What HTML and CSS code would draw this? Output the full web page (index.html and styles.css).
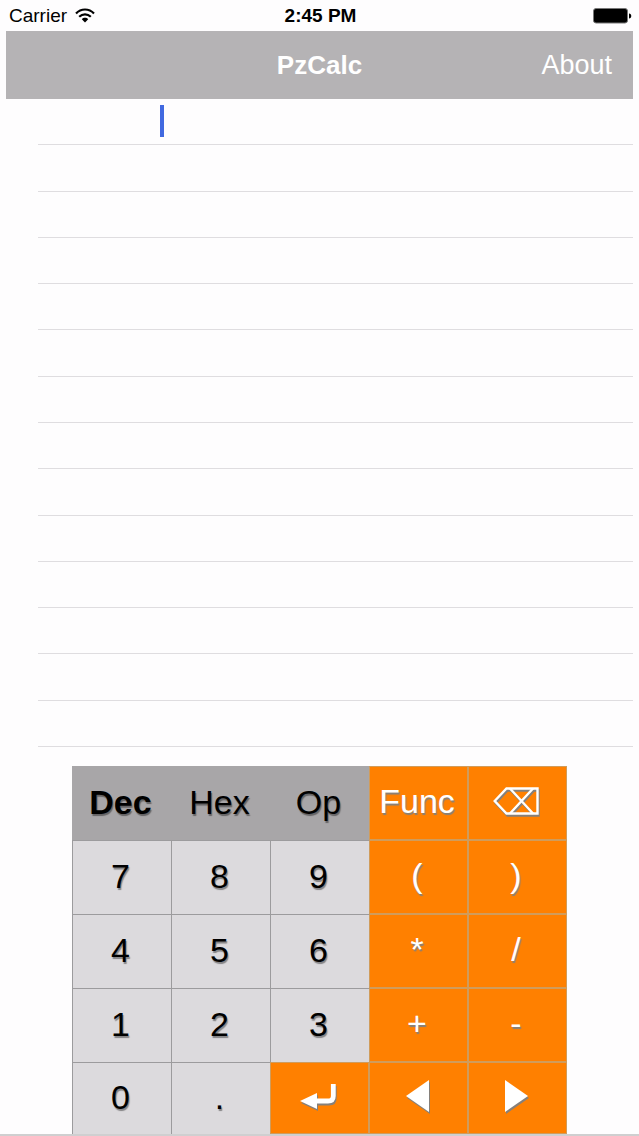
FILE: index.html
```html
<!DOCTYPE html>
<html lang="en">
<head>
    <meta charset="UTF-8">
    <meta name="viewport" content="width=device-width, initial-scale=1">
    <title>PzCalc</title>
    <link rel="stylesheet" href="styles.css">
</head>
<body>
<div class="status">
    <div class="carrier">
        <span>Carrier</span>
        <svg class="wifi" width="20" height="15" viewBox="0 0 20 15" fill="none" stroke="#000" aria-hidden="true">
            <path d="M1 5.4C6 .2 14 .2 19 5.4" stroke-width="2.2"/>
            <path d="M4.2 8.8C7.6 5.5 12.4 5.5 15.8 8.8" stroke-width="2.2"/>
            <path d="M6.8 11.2C8.6 9.3 11.4 9.3 13.2 11.2L10 14.4Z" fill="#000" stroke="none"/>
        </svg>
    </div>
    <span class="time">2:45 PM</span>
    <svg class="battery" width="39" height="16" viewBox="0 0 39 16" aria-hidden="true">
        <rect x=".5" y=".5" width="34" height="14.5" rx="2.5" fill="#000" stroke="#777"/>
        <path d="M36 5.5c3 0 3 5 0 5z" fill="#000"/>
    </svg>
</div>
<header class="nav">
    <h1>PzCalc</h1>
    <a href="#about">About</a>
</header>
<main class="paper">
    <div class="line entry">
        <span class="caret"></span>
        <input type="text" aria-label="Expression">
    </div>
    <div class="line"></div>
    <div class="line"></div>
    <div class="line"></div>
    <div class="line"></div>
    <div class="line"></div>
    <div class="line"></div>
    <div class="line"></div>
    <div class="line"></div>
    <div class="line"></div>
    <div class="line"></div>
    <div class="line"></div>
    <div class="line"></div>
    <div class="line"></div>
</main>
<div class="keyboard">
    <div class="keys">
        <button class="key mode active" type="button">Dec</button>
        <button class="key mode" type="button">Hex</button>
        <button class="key mode" type="button">Op</button>
        <button class="key op" type="button">Func</button>
        <button class="key op" type="button" aria-label="Delete">
            <svg width="46" height="28" viewBox="0 0 46 28" fill="none" stroke="#fff" stroke-width="2.4">
                <path d="M1.7 14L13.5 1.5H44.5V26.5H13.5Z"/>
                <path d="M17 1.5L40 26.5M40 1.5L17 26.5"/>
            </svg>
        </button>

        <button class="key" type="button">7</button>
        <button class="key" type="button">8</button>
        <button class="key" type="button">9</button>
        <button class="key op" type="button">(</button>
        <button class="key op" type="button">)</button>

        <button class="key" type="button">4</button>
        <button class="key" type="button">5</button>
        <button class="key" type="button">6</button>
        <button class="key op" type="button">*</button>
        <button class="key op" type="button">/</button>

        <button class="key" type="button">1</button>
        <button class="key" type="button">2</button>
        <button class="key" type="button">3</button>
        <button class="key op" type="button">+</button>
        <button class="key op" type="button">-</button>

        <button class="key" type="button">0</button>
        <button class="key" type="button">.</button>
        <button class="key op" type="button" aria-label="Enter">
            <svg width="36" height="25" viewBox="0 0 36 25">
                <path d="M0 17L17 9V25Z" fill="#fff"/>
                <path d="M16 17H28Q33.3 17 33.3 12V0" fill="none" stroke="#fff" stroke-width="4.8"/>
            </svg>
        </button>
        <button class="key op" type="button" aria-label="Left">
            <svg width="23" height="32" viewBox="0 0 23 32"><path d="M0 16L23 0V32Z" fill="#fff"/></svg>
        </button>
        <button class="key op" type="button" aria-label="Right">
            <svg width="23" height="32" viewBox="0 0 23 32"><path d="M23 16L0 0V32Z" fill="#fff"/></svg>
        </button>
    </div>
</div>
</body>
</html>
```

FILE: styles.css
```css
*{
    box-sizing: border-box;
    padding: 0;
    margin: 0;
}
body{
    display: flex;
    flex-direction: column;
    min-height: 100vh;
    background: #fefdfe;
    font-family: "Liberation Sans", Arial, sans-serif;
    color: #000;
}
.status{
    display: grid;
    grid-template-columns: 1fr auto 1fr;
    align-items: center;
    height: 31px;
    padding: 0 7px 0 9px;
    font-size: 19px;
    line-height: 31px;
}
.carrier{
    display: flex;
    align-items: center;
    gap: 8px;
}
.time{
    font-weight: bold;
}
.battery{
    justify-self: end;
}
.nav{
    display: grid;
    grid-template-columns: 1fr auto 1fr;
    align-items: center;
    height: 68px;
    margin: 0 6px;
    padding: 0 21px;
    background: #b5b3b5;
    color: #fff;
    font-size: 27px;
}
.nav h1{
    grid-column: 2;
    font-size: 26px;
}
.nav a{
    justify-self: end;
    color: #fff;
    text-decoration: none;
}
.paper{
    flex: 1;
    display: grid;
    grid-template-rows: repeat(14, minmax(32px, 1fr));
    margin: 0 6px 19px 38px;
}
.line{
    border-bottom: 1px solid #dfdde0;
}
.entry{
    display: flex;
    align-items: center;
    padding: 0 0 2px 122px;
}
.caret{
    width: 4px;
    height: 32px;
    background: #4169e0;
}
.entry input{
    flex: 1;
    min-width: 0;
    border: 0;
    outline: 0;
    background: none;
    font: inherit;
    font-size: 26px;
}

/* keyboard */
.keyboard{
    padding: 0 72px;
    border-bottom: 2px solid #cfcfd0;
}
.keys{
    display: grid;
    grid-template-columns: repeat(5, 1fr);
    grid-template-rows: repeat(4, 74px) 72px;
}
.key{
    display: flex;
    align-items: center;
    justify-content: center;
    padding: 0 3px 4px 0;
    border: 0 solid #9c9b9d;
    border-width: 1px 0 0 1px;
    background: #dcdadd;
    color: #000;
    font-family: inherit;
    font-size: 34px;
    line-height: 40px;
    text-shadow: 1px 2px 1px rgba(0,0,0,0.4);
}
.mode{
    background: #a8a6a8;
    border-color: #a8a6a8;
}
.active{
    font-weight: bold;
}
.op{
    border: 1px solid #d09c5c;
    background: #ff8000;
    color: #fff;
    text-shadow: 1px 2px 1px #86807a;
}
.op svg{
    overflow: visible;
    filter: drop-shadow(1px 2px 0 #86807a);
}
```
